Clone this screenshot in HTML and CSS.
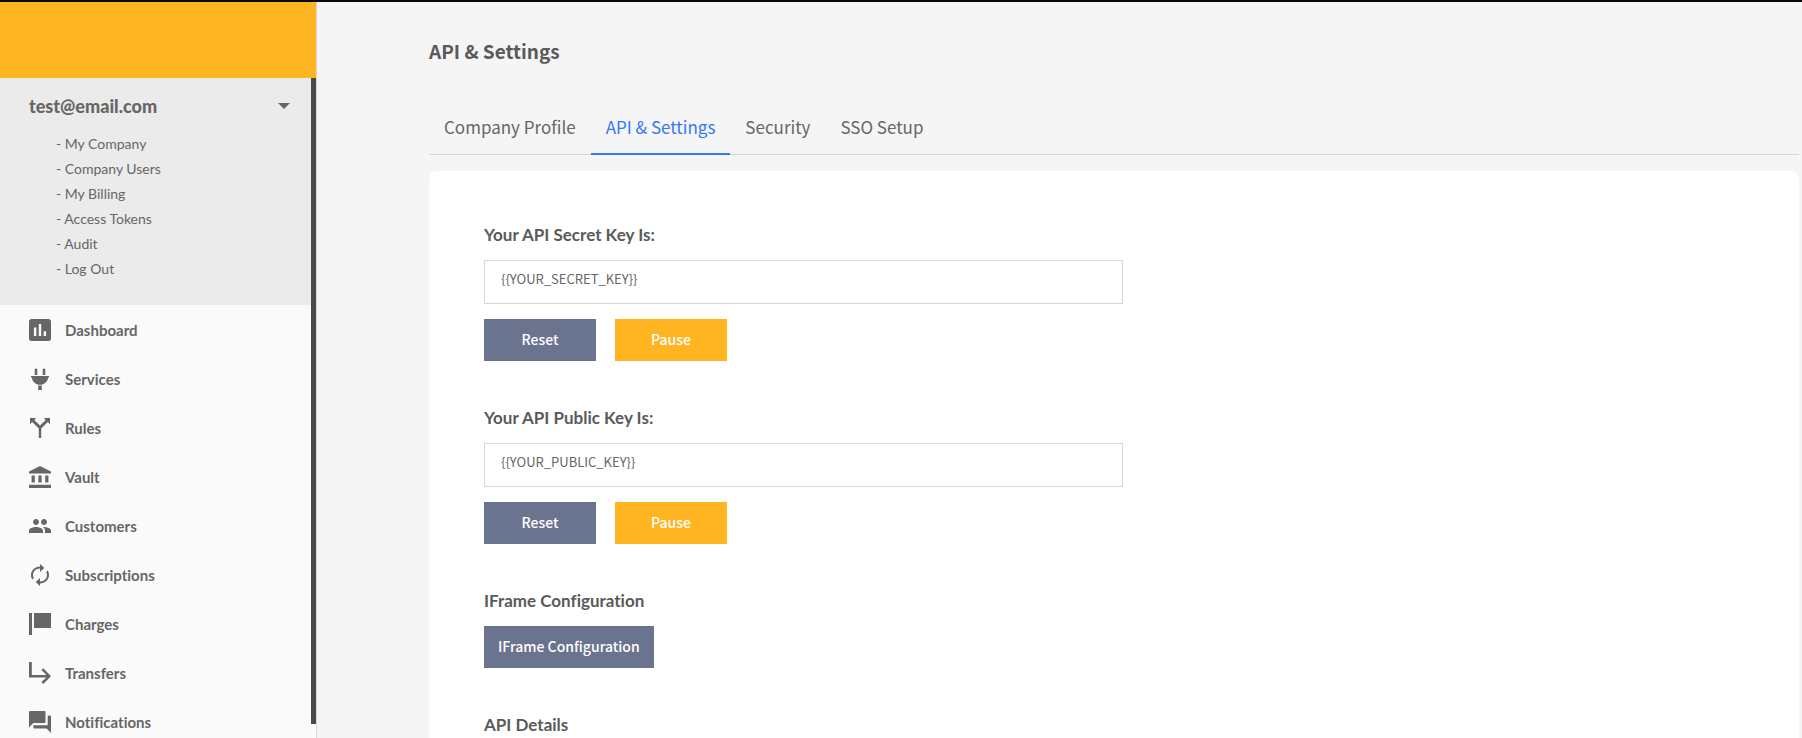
FILE: index.html
```html
<!DOCTYPE html>
<html lang="en">
<head>
<meta charset="utf-8">
<title>API &amp; Settings</title>
<link rel="stylesheet" href="styles.css">
</head>
<body>
<div class="app">
  <aside class="sidebar">
    <div class="brand"></div>
    <div class="sidebar-scroll">
      <div class="sidebar-content">
        <section class="account">
          <button class="account-toggle" type="button">
            <span>test@email.com</span>
            <svg class="caret" viewBox="0 0 12 6" aria-hidden="true"><path d="M0 0h12L6 6z"/></svg>
          </button>
          <ul class="account-menu">
            <li><a href="#">- My Company</a></li>
            <li><a href="#">- Company Users</a></li>
            <li><a href="#">- My Billing</a></li>
            <li><a href="#">- Access Tokens</a></li>
            <li><a href="#">- Audit</a></li>
            <li><a href="#">- Log Out</a></li>
          </ul>
        </section>
        <nav class="nav">
          <a class="nav-link" href="#"><svg class="icon" viewBox="3 3 18 18" aria-hidden="true"><path d="M19 3H5c-1.1 0-2 .9-2 2v14c0 1.1.9 2 2 2h14c1.1 0 2-.9 2-2V5c0-1.1-.9-2-2-2zM9 17H7v-7h2v7zm4 0h-2V7h2v10zm4 0h-2v-4h2v4z"/></svg>Dashboard</a>
          <a class="nav-link" href="#"><svg class="icon" viewBox="0 0 22 22" aria-hidden="true"><path d="M7 0.500h0a1.300 1.300 0 0 1 1.300 1.300V7H5.700V1.800A1.300 1.300 0 0 1 7 .5zM15 .5a1.300 1.300 0 0 1 1.300 1.300V7h-2.600V1.800A1.300 1.300 0 0 1 15 .5zM2 8h18v1.500h-.8C18.600 13.800 15.200 16.800 11 16.800S3.400 13.800 2.800 9.500H2zM9.200 17.500h3.600V22H9.200z"/></svg>Services</a>
          <a class="nav-link" href="#"><svg class="icon" viewBox="0 0 22 22" aria-hidden="true"><path d="M1 1h6.200L5.300 2.900 11 8.600l5.700-5.700L14.800 1H21v6.200l-2.200-2.200-6.600 6.600V21H9.800v-9.400L3.200 5 1 7.200z"/></svg>Rules</a>
          <a class="nav-link" href="#"><svg class="icon" viewBox="0 0 22 22" aria-hidden="true"><path d="M11 0l11 5.500V7.500H0V5.500zM2.600 9.500h3.200v7H2.600zM9.400 9.500h3.200v7H9.400zM16.200 9.500h3.200v7h-3.200zM0 18.800h22V22H0z"/></svg>Vault</a>
          <a class="nav-link" href="#"><svg class="icon" viewBox="1 1 22 22" aria-hidden="true"><path d="M16 11c1.660 0 2.990-1.340 2.990-3S17.660 5 16 5s-3 1.340-3 3 1.340 3 3 3zm-8 0c1.660 0 2.990-1.340 2.990-3S9.660 5 8 5 5 6.340 5 8s1.340 3 3 3zm0 2c-2.330 0-7 1.170-7 3.500V19h14v-2.500c0-2.330-4.670-3.500-7-3.500zm8 0c-.29 0-.62.020-.97.050 1.160.84 1.970 1.970 1.970 3.450V19h6v-2.500c0-2.330-4.670-3.500-7-3.500z"/></svg>Customers</a>
          <a class="nav-link" href="#"><svg class="icon" viewBox="1 1 22 22" aria-hidden="true"><path d="M12 5.500V9l4.300-4L12 1v2.500c-5 0-9 3.700-9 8.500 0 1.700.5 3.200 1.300 4.400l1.500-1.500C5.300 14 5 13 5 12c0-3.600 3-6.500 7-6.500zm7.700 2.100l-1.500 1.500c.5.900.8 1.900.8 2.900 0 3.600-3 6.500-7 6.500V15l-4.300 4 4.300 4v-2.500c5 0 9-3.700 9-8.500 0-1.700-.5-3.200-1.300-4.400z"/></svg>Subscriptions</a>
          <a class="nav-link" href="#"><svg class="icon" viewBox="0 0 22 22" aria-hidden="true"><path d="M0 0h3v22H0zM5 0h17v15H5z"/></svg>Charges</a>
          <a class="nav-link" href="#"><svg class="icon" viewBox="0 0 22 22" aria-hidden="true"><path d="M0 0h2.800v12.900h14.700l-5.100-4.800 1.900-1.900L22 14.200l-7.700 7.700-1.900-1.900 5-4.500H0z"/></svg>Transfers</a>
          <a class="nav-link" href="#"><svg class="icon" viewBox="2 2 20 20" aria-hidden="true"><path d="M21 6h-2v9H6v2c0 .55.45 1 1 1h11l4 4V7c0-.55-.45-1-1-1zm-4 6V3c0-.55-.45-1-1-1H3c-.55 0-1 .45-1 1v14l4-4h10c.55 0 1-.45 1-1z"/></svg>Notifications</a>
        </nav>
      </div>
      <div class="scroll-track"><div class="scroll-thumb"></div></div>
    </div>
  </aside>
  <main class="main">
    <h1 class="page-title">API &amp; Settings</h1>
    <nav class="tabs">
      <a class="tab" href="#">Company Profile</a>
      <a class="tab tab-active" href="#" aria-current="page">API &amp; Settings</a>
      <a class="tab" href="#">Security</a>
      <a class="tab" href="#">SSO Setup</a>
    </nav>
    <div class="panel">
      <section class="group">
        <label class="group-title" for="secret-key">Your API Secret Key Is:</label>
        <input class="key-input" id="secret-key" type="text" value="{{YOUR_SECRET_KEY}}" readonly>
        <div class="actions">
          <button class="btn" type="button">Reset</button>
          <button class="btn btn-warn" type="button">Pause</button>
        </div>
      </section>
      <section class="group">
        <label class="group-title" for="public-key">Your API Public Key Is:</label>
        <input class="key-input" id="public-key" type="text" value="{{YOUR_PUBLIC_KEY}}" readonly>
        <div class="actions">
          <button class="btn" type="button">Reset</button>
          <button class="btn btn-warn" type="button">Pause</button>
        </div>
      </section>
      <section class="group">
        <h2 class="group-title">IFrame Configuration</h2>
        <div class="actions">
          <button class="btn" type="button">IFrame Configuration</button>
        </div>
      </section>
      <section class="group">
        <h2 class="group-title">API Details</h2>
      </section>
    </div>
  </main>
</div>
</body>
</html>
```
FILE: styles.css
```css
* {
  box-sizing: border-box;
}

body {
  margin: 0;
  background: #f5f5f5;
  color: #666;
  font-family: Lato, "Liberation Sans", sans-serif;
  font-variant-ligatures: none;
}

a {
  color: inherit;
  text-decoration: none;
}

button,
input {
  font: inherit;
  color: inherit;
}

.app {
  display: flex;
  height: 100vh;
  overflow: hidden;
  border-top: 2px solid #09080a;
}

.sidebar {
  display: flex;
  flex-direction: column;
  flex: 0 0 317px;
  border-right: 1px solid #d8d8d8;
  background: #fafafa;
}

.brand {
  flex: 0 0 76px;
  background: #ffb521;
}

.sidebar-scroll {
  display: flex;
  flex: 1;
  min-height: 0;
}

.sidebar-content {
  flex: 1;
  overflow: hidden;
}

.scroll-track {
  width: 5px;
  padding-bottom: 14px;
}

.scroll-thumb {
  height: 100%;
  background: #4a4a4a;
}

.account {
  padding: 16px 21px 24px 29px;
  background: #ebebeb;
}

.account-toggle {
  display: flex;
  align-items: center;
  justify-content: space-between;
  width: 100%;
  padding: 0;
  border: 0;
  background: none;
  font-size: 18px;
  font-weight: 900;
  line-height: 24px;
}

.caret {
  width: 12px;
  height: 6px;
  fill: #666;
}

.account-menu {
  margin: 0;
  padding: 13px 0 0 27px;
  list-style: none;
  font-size: 14px;
  line-height: 25px;
}

.nav-link {
  display: flex;
  align-items: center;
  gap: 14px;
  height: 49px;
  padding-left: 29px;
  font-size: 15px;
  font-weight: 700;
}

.icon {
  width: 22px;
  height: 22px;
  fill: #666;
}

.main {
  display: flex;
  flex-direction: column;
  flex: 1;
  min-width: 0;
  padding: 34px 3px 0 112px;
}

.page-title {
  margin: 0;
  color: #5a5a5a;
  font-family: "Noto Sans CJK SC", sans-serif;
  font-size: 19px;
  font-weight: 700;
  line-height: 30px;
}

.tabs {
  display: flex;
  margin-top: 38px;
  border-bottom: 1px solid #d6d6d6;
  font-family: "Noto Sans CJK SC", sans-serif;
  font-size: 17px;
  line-height: 24px;
}

.tab {
  margin-bottom: -1px;
  padding: 11px 15px 14px;
  border-bottom: 2px solid transparent;
}

.tab-active {
  border-color: #3478f6;
  color: #3478f6;
}

.panel {
  flex: 1;
  margin-top: 16px;
  padding: 52px 55px 0;
  border-radius: 8px 8px 0 0;
  background: #fff;
}

.group {
  margin-bottom: 45px;
}

.group-title {
  display: block;
  margin: 0 0 13px;
  color: #5a5a5a;
  font-size: 17px;
  font-weight: 700;
  line-height: 24px;
}

.key-input {
  display: block;
  width: 100%;
  max-width: 639px;
  height: 44px;
  margin-bottom: 15px;
  padding: 0 16px 8px;
  border: 1px solid #d6d6d6;
  background: #fff;
  font-family: "Noto Sans CJK SC", sans-serif;
  font-size: 13px;
}

.actions {
  display: flex;
  gap: 19px;
}

.btn {
  min-width: 112px;
  height: 42px;
  padding: 0 14px 2px;
  border: 0;
  background: #6b748f;
  color: #fff;
  font-family: "Noto Sans CJK SC", sans-serif;
  font-size: 14px;
  font-weight: 500;
}

.btn-warn {
  background: #ffb521;
}
```
